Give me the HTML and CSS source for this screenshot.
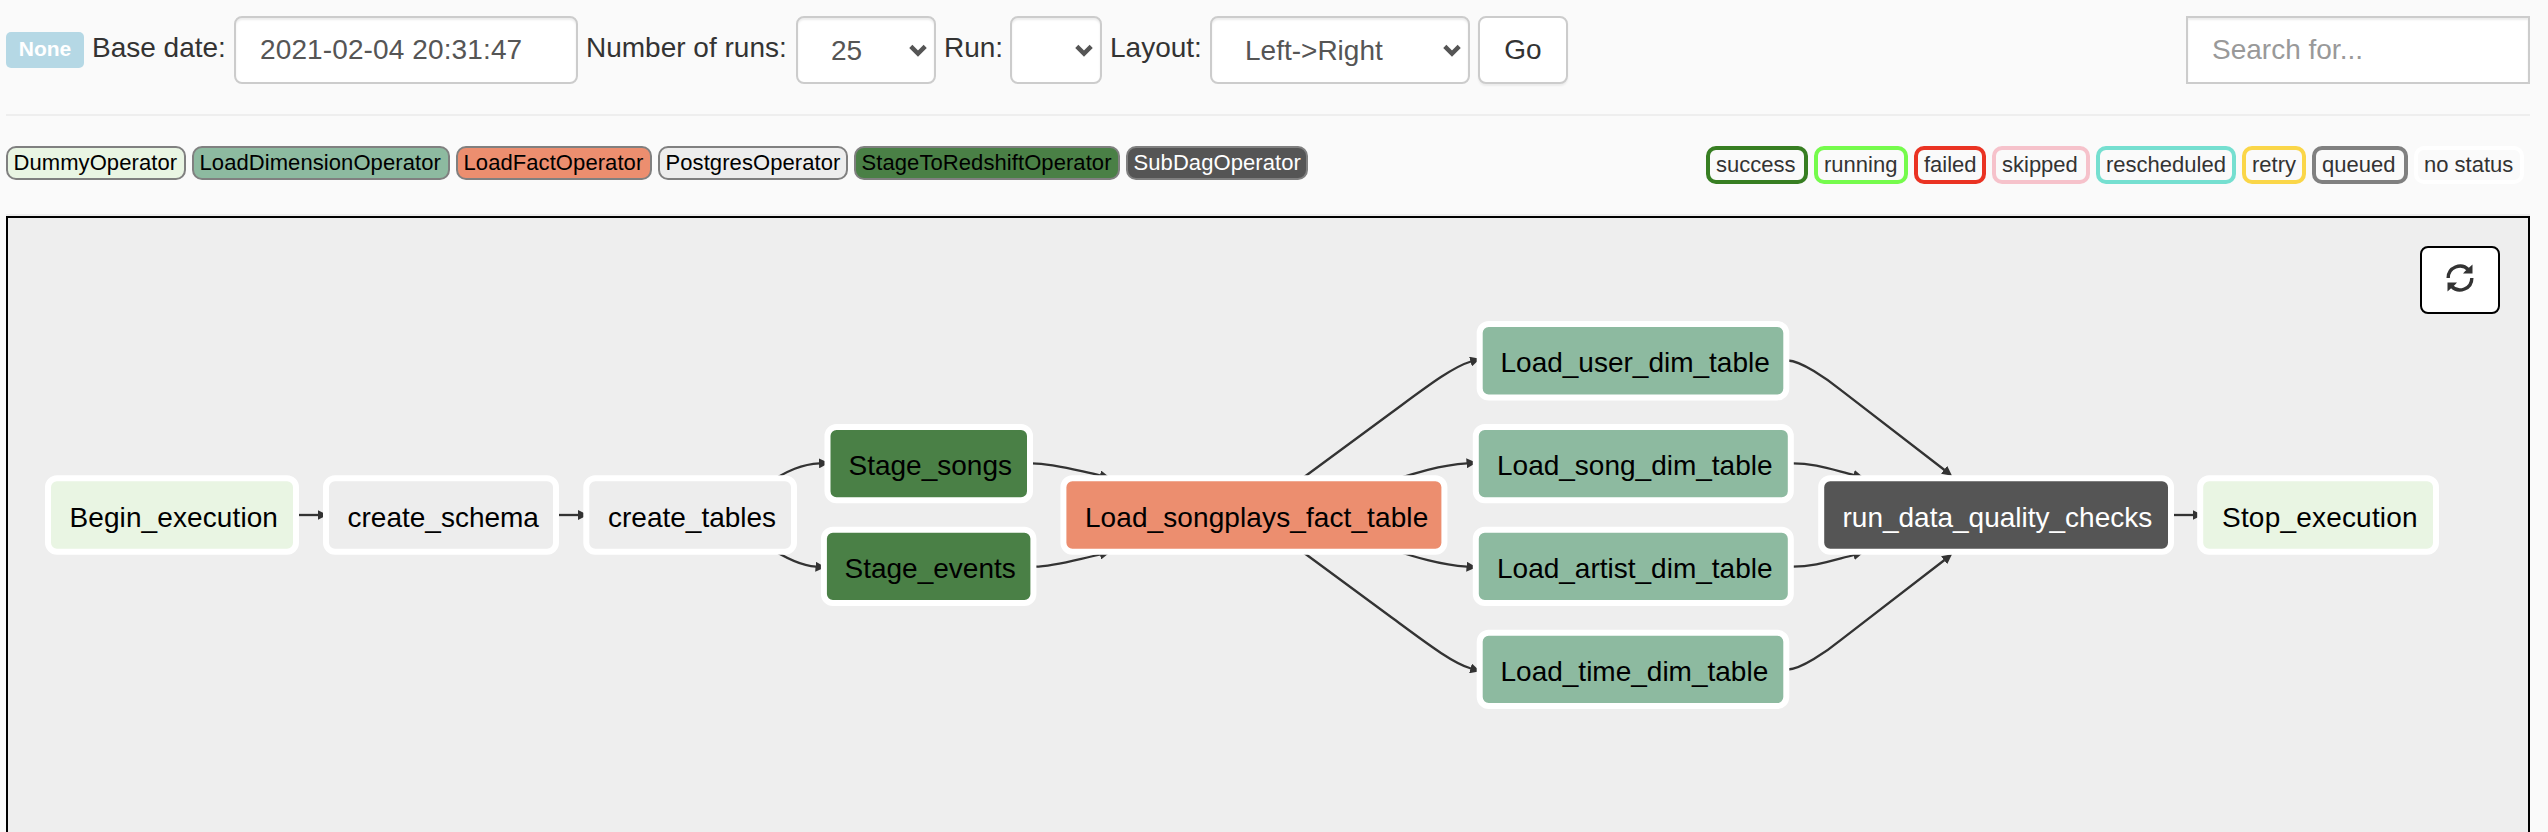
FILE: index.html
```html
<!DOCTYPE html>
<html lang="en">
<head>
<meta charset="utf-8">
<title>DAG graph view</title>
<link rel="stylesheet" href="styles.css">
</head>
<body>
<header class="toolbar">
  <span class="badge">None</span>
  <label class="lbl base">Base date:</label>
  <input class="field date" value="2021-02-04 20:31:47">
  <label class="lbl runs">Number of runs:</label>
  <div class="field select num"><span>25</span><svg class="chev" viewBox="0 0 18 13"><path d="M1.8 2.4 9 9.6l7.200-7.200"/></svg></div>
  <label class="lbl run">Run:</label>
  <div class="field select empty"><span></span><svg class="chev" viewBox="0 0 18 13"><path d="M1.8 2.4 9 9.6l7.200-7.200"/></svg></div>
  <label class="lbl layout">Layout:</label>
  <div class="field select dir"><span>Left-&gt;Right</span><svg class="chev" viewBox="0 0 18 13"><path d="M1.8 2.4 9 9.6l7.200-7.200"/></svg></div>
  <button class="go">Go</button>
  <input class="field search" placeholder="Search for...">
</header>
<section class="legend">
  <div class="operators">
    <span class="op dummy">DummyOperator</span>
    <span class="op dim">LoadDimensionOperator</span>
    <span class="op fact">LoadFactOperator</span>
    <span class="op postgres">PostgresOperator</span>
    <span class="op stage">StageToRedshiftOperator</span>
    <span class="op subdag">SubDagOperator</span>
  </div>
  <div class="states">
    <span class="st success">success</span>
    <span class="st running">running</span>
    <span class="st failed">failed</span>
    <span class="st skipped">skipped</span>
    <span class="st rescheduled">rescheduled</span>
    <span class="st retry">retry</span>
    <span class="st queued">queued</span>
    <span class="st nostatus">no status</span>
  </div>
</section>
<main class="graph">
  <svg class="dag" viewBox="8 218 2520 614">
    <defs>
      <marker id="head" markerUnits="userSpaceOnUse" markerWidth="10" markerHeight="10" refX="0.500" refY="5" orient="auto"><path d="M0 0 10 5 0 10z" fill="#333"/></marker>
    </defs>
    <g class="edges">
      <path d="M298 515H318"/>
      <path d="M558 515H578.500"/>
      <path d="M765 485C788 470 803 464 819.500 463.300"/>
      <path d="M765 545C788 560 803 566 816 566.700"/>
      <path d="M1032 463.300C1053 463.300 1075 470 1100.500 475.500"/>
      <path d="M1035 566.700C1053 566.700 1075 560 1100.500 554.500"/>
      <path d="M1296 483 1391 413C1425 388 1452 367 1471 361.500"/>
      <path d="M1296 547 1391 617C1425 642 1452 663 1471 668.500"/>
      <path d="M1390 481C1415 473 1440 465 1467 463.300"/>
      <path d="M1390 549C1415 557 1440 565 1467 566.700"/>
      <path d="M1788 360.500C1801 361 1826 378 1841.600 390.700L1944.500 470"/>
      <path d="M1788 669.500C1801 669 1826 652 1841.600 639.300L1944.500 560"/>
      <path d="M1793 463.300C1813 463.300 1830 469 1854 475"/>
      <path d="M1793 566.700C1813 566.700 1830 561 1854 555"/>
      <path d="M2173 515H2193"/>
    </g>
    <g class="nodes">
      <rect class="dummy" x="48" y="478.300" width="248" height="73.400" rx="9"/>
      <rect class="postgres" x="326" y="478.300" width="230" height="73.400" rx="9"/>
      <rect class="postgres" x="586.300" y="478.300" width="207.700" height="73.400" rx="9"/>
      <rect class="stage" x="827.500" y="426.900" width="202.500" height="73.400" rx="9"/>
      <rect class="stage" x="823.900" y="529.700" width="209.500" height="73.400" rx="9"/>
      <rect class="fact" x="1063.400" y="478.300" width="381" height="73.400" rx="9"/>
      <rect class="dim" x="1479.700" y="324" width="306.600" height="73.400" rx="9"/>
      <rect class="dim" x="1475.800" y="426.900" width="315" height="73.400" rx="9"/>
      <rect class="dim" x="1475.800" y="529.700" width="315" height="73.400" rx="9"/>
      <rect class="dim" x="1479.700" y="632.700" width="306.600" height="73.400" rx="9"/>
      <rect class="subdag" x="1821.200" y="478.300" width="349.800" height="73.400" rx="9"/>
      <rect class="dummy" x="2200.200" y="478.300" width="235.800" height="73.400" rx="9"/>
    </g>
    <g class="names">
      <text x="69.500" y="527" class="loose">Begin_execution</text>
      <text x="347.500" y="527">create_schema</text>
      <text x="608" y="527">create_tables</text>
      <text x="848.500" y="474.500">Stage_songs</text>
      <text x="844.500" y="577.500">Stage_events</text>
      <text x="1084.900" y="527" class="loose">Load_songplays_fact_table</text>
      <text x="1500.500" y="372">Load_user_dim_table</text>
      <text x="1497" y="474.500">Load_song_dim_table</text>
      <text x="1497" y="578">Load_artist_dim_table</text>
      <text x="1500.500" y="681">Load_time_dim_table</text>
      <text class="inv" x="1842.500" y="527">run_data_quality_checks</text>
      <text x="2222" y="527" class="looser">Stop_execution</text>
    </g>
  </svg>
  <button class="refresh" aria-label="Refresh"><svg viewBox="0 0 28 28"><path class="arc" d="M2.200 14A11.800 11.800 0 0 1 22.500 5.700M25.800 14A11.800 11.800 0 0 1 5.500 22.300"/><path d="M26.500 .5v9H17l2-2.300zM1.500 27.500v-9H11l-2 2.300z"/></svg></button>
</main>
</body>
</html>
```
FILE: styles.css
```css
* { box-sizing: border-box; }
body {
  margin: 0;
  height: 832px;
  overflow: hidden;
  padding: 0 18px 0 6px;
  background: #fafafa;
  color: #333;
  font: 28px/40px "Liberation Sans", Arial, sans-serif;
}
.toolbar {
  display: flex;
  align-items: flex-start;
  height: 116px;
  padding-top: 16px;
  border-bottom: 2px solid #eee;
}
.badge {
  width: 78px;
  height: 36px;
  margin-top: 16px;
  border-radius: 5px;
  background: #b5d8e5;
  color: #fff;
  font-size: 21px;
  font-weight: bold;
  line-height: 33px;
  text-align: center;
}
.lbl { margin-top: 12px; margin-left: 8px; white-space: nowrap; }
.base { width: 142px; }
.runs { width: 210px; }
.run { width: 66px; }
.layout { width: 100px; }
.field {
  height: 68px;
  padding: 0 24px;
  border: 2px solid #ccc;
  border-radius: 8px;
  background: #fff;
  box-shadow: inset 0 2px 2px rgba(0, 0, 0, .075);
  color: #555;
  font: inherit;
}
.date { width: 344px; letter-spacing: .12px; }
.select { display: flex; align-items: center; justify-content: space-between; padding: 0 7px 0 33px; }
.select span { padding-top: 1px; white-space: nowrap; }
.num { width: 140px; }
.empty { width: 92px; }
.dir { width: 260px; }
.chev { width: 18px; height: 13px; fill: none; stroke: #555; stroke-width: 4.4; }
.go {
  width: 90px;
  height: 68px;
  margin-left: 8px;
  padding: 0;
  border: 2px solid #ccc;
  border-radius: 8px;
  background: #fff;
  box-shadow: 0 2px 2px rgba(0, 0, 0, .06);
  color: #333;
  font: inherit;
}
.search { width: 344px; margin-left: auto; border-radius: 0; }
.search::placeholder { color: #999; opacity: 1; }
.legend {
  display: flex;
  justify-content: space-between;
  height: 100px;
  padding-top: 30px;
  border-bottom: 2px solid #eee;
  font-size: 22px;
}
.operators, .states { display: flex; gap: 6px; align-items: flex-start; }
.states { padding-right: 6px; }
.op, .st { border-radius: 10px; white-space: nowrap; }
.op { height: 34px; padding-left: 5.5px; border: 2px solid #808080; color: #000; line-height: 30px; letter-spacing: .08px; }
.st { height: 38px; padding-left: 6px; border: 4px solid; line-height: 30px; }
.op.dummy { width: 180px; background: #e9f5e3; }
.op.dim { width: 258px; background: #8dbaa0; }
.op.fact { width: 196px; background: #ec8e6f; }
.op.postgres { width: 190px; background: #ededed; }
.op.stage { width: 266px; background: #4a8046; }
.op.subdag { width: 182px; background: #555; color: #fff; }
.success { width: 102px; border-color: #377e22; }
.running { width: 94px; border-color: #75fb4c; }
.failed { width: 72px; border-color: #ea3323; }
.skipped { width: 98px; border-color: #f6c2cb; }
.rescheduled { width: 140px; border-color: #75dfd0; }
.retry { width: 64px; border-color: #fad648; }
.queued { width: 96px; border-color: #808080; }
.nostatus { width: 110px; border-color: #fff; }
.graph {
  position: relative;
  height: 640px;
  border: 2px solid #000;
  background: #eee;
}
.dag { display: block; width: 2520px; height: 614px; }
.edges path { fill: none; stroke: #333; stroke-width: 2.3; marker-end: url(#head); }
.nodes rect { stroke: #fff; stroke-width: 6; }
.nodes .dummy { fill: #e9f5e3; }
.nodes .dim { fill: #8dbaa0; }
.nodes .fact { fill: #ec8e6f; }
.nodes .postgres { fill: #ededed; }
.nodes .stage { fill: #4a8046; }
.nodes .subdag { fill: #555; }
.names text { font-size: 28px; fill: #000; }
.names .loose { letter-spacing: .1px; }
.names .looser { letter-spacing: .2px; }
.names .inv { fill: #fff; }
.refresh {
  position: absolute;
  top: 28px;
  right: 28px;
  display: grid;
  place-items: center;
  width: 80px;
  height: 68px;
  padding: 0 0 4px;
  border: 2px solid #000;
  border-radius: 8px;
  background: #fff;
}
.refresh svg { width: 28px; height: 28px; fill: #333; }
.refresh .arc { fill: none; stroke: #333; stroke-width: 3.4; }
```
